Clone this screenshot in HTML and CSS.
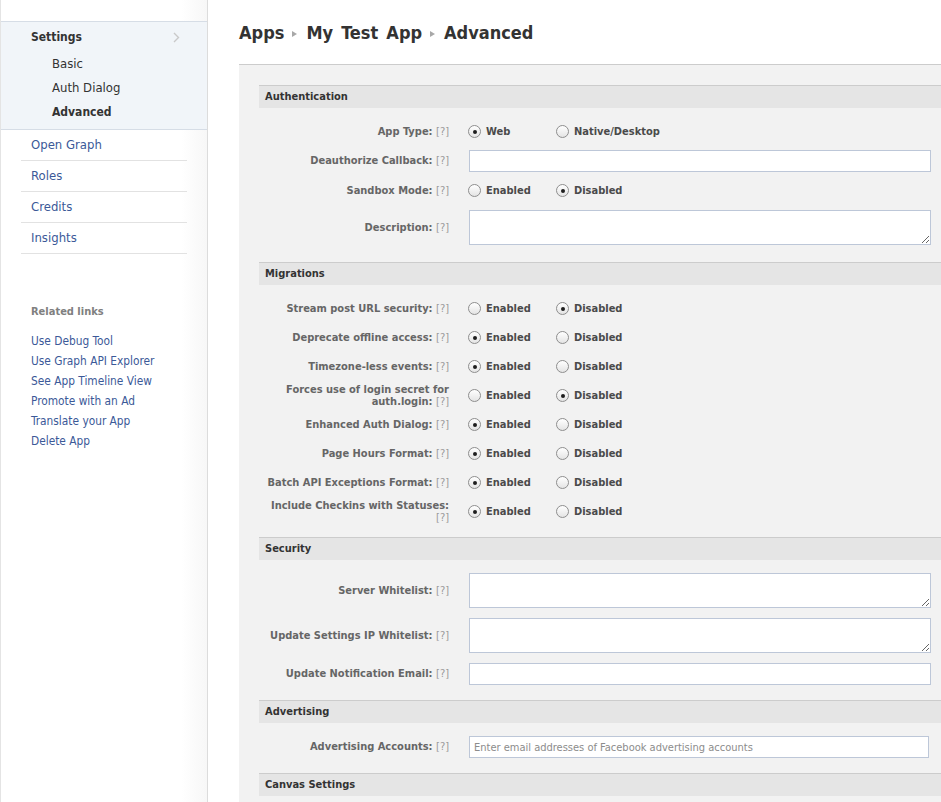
FILE: index.html
```html
<!DOCTYPE html>
<html>
<head>
<meta charset="utf-8">
<title>Advanced - My Test App</title>
<link rel="stylesheet" href="styles.css">
</head>
<body>
<div class="page">
  <aside class="sidebar">
    <div class="side-top"></div>
    <div class="settings">
      <div class="settings-head">
        <span>Settings</span>
        <svg class="chev" width="7" height="11" viewBox="0 0 7 11"><path d="M1 1 L5.5 5.5 L1 10" fill="none" stroke="#c9c9c9" stroke-width="1.4"/></svg>
      </div>
      <ul class="sub">
        <li>Basic</li>
        <li>Auth Dialog</li>
        <li class="current">Advanced</li>
      </ul>
    </div>
    <ul class="nav">
      <li><a href="#">Open Graph</a></li>
      <li><a href="#">Roles</a></li>
      <li><a href="#">Credits</a></li>
      <li><a href="#">Insights</a></li>
    </ul>
    <div class="related">
      <div class="related-head">Related links</div>
      <ul class="related-list">
        <li><a href="#">Use Debug Tool</a></li>
        <li><a href="#">Use Graph API Explorer</a></li>
        <li><a href="#">See App Timeline View</a></li>
        <li><a href="#">Promote with an Ad</a></li>
        <li><a href="#">Translate your App</a></li>
        <li><a href="#">Delete App</a></li>
      </ul>
    </div>
  </aside>

  <main class="main">
    <h1 class="crumbs"><span>Apps</span><span class="tri"></span><span class="crumb-mid">My Test App</span><span class="tri"></span><span>Advanced</span></h1>
    <div class="panel">

      <section class="sec">
        <h2 class="sec-head">Authentication</h2>
        <div class="sec-body sec-auth">
          <div class="row">
            <div class="lbl">App Type: <span class="q">[?]</span></div>
            <div class="ctl">
              <label class="opt"><input type="radio" name="apptype" checked>Web</label>
              <label class="opt wide"><input type="radio" name="apptype">Native/Desktop</label>
            </div>
          </div>
          <div class="row">
            <div class="lbl">Deauthorize Callback: <span class="q">[?]</span></div>
            <div class="ctl"><input class="text" type="text"></div>
          </div>
          <div class="row">
            <div class="lbl">Sandbox Mode: <span class="q">[?]</span></div>
            <div class="ctl">
              <label class="opt"><input type="radio" name="sandbox">Enabled</label>
              <label class="opt"><input type="radio" name="sandbox" checked>Disabled</label>
            </div>
          </div>
          <div class="row">
            <div class="lbl">Description: <span class="q">[?]</span></div>
            <div class="ctl"><textarea class="area"></textarea></div>
          </div>
        </div>
      </section>

      <section class="sec">
        <h2 class="sec-head">Migrations</h2>
        <div class="sec-body sec-mig">
          <div class="row">
            <div class="lbl">Stream post URL security: <span class="q">[?]</span></div>
            <div class="ctl">
              <label class="opt"><input type="radio" name="m1">Enabled</label>
              <label class="opt"><input type="radio" name="m1" checked>Disabled</label>
            </div>
          </div>
          <div class="row">
            <div class="lbl">Deprecate offline access: <span class="q">[?]</span></div>
            <div class="ctl">
              <label class="opt"><input type="radio" name="m2" checked>Enabled</label>
              <label class="opt"><input type="radio" name="m2">Disabled</label>
            </div>
          </div>
          <div class="row">
            <div class="lbl">Timezone-less events: <span class="q">[?]</span></div>
            <div class="ctl">
              <label class="opt"><input type="radio" name="m3" checked>Enabled</label>
              <label class="opt"><input type="radio" name="m3">Disabled</label>
            </div>
          </div>
          <div class="row">
            <div class="lbl">Forces use of login secret for<br>auth.login: <span class="q">[?]</span></div>
            <div class="ctl">
              <label class="opt"><input type="radio" name="m4">Enabled</label>
              <label class="opt"><input type="radio" name="m4" checked>Disabled</label>
            </div>
          </div>
          <div class="row">
            <div class="lbl">Enhanced Auth Dialog: <span class="q">[?]</span></div>
            <div class="ctl">
              <label class="opt"><input type="radio" name="m5" checked>Enabled</label>
              <label class="opt"><input type="radio" name="m5">Disabled</label>
            </div>
          </div>
          <div class="row">
            <div class="lbl">Page Hours Format: <span class="q">[?]</span></div>
            <div class="ctl">
              <label class="opt"><input type="radio" name="m6" checked>Enabled</label>
              <label class="opt"><input type="radio" name="m6">Disabled</label>
            </div>
          </div>
          <div class="row">
            <div class="lbl">Batch API Exceptions Format: <span class="q">[?]</span></div>
            <div class="ctl">
              <label class="opt"><input type="radio" name="m7" checked>Enabled</label>
              <label class="opt"><input type="radio" name="m7">Disabled</label>
            </div>
          </div>
          <div class="row">
            <div class="lbl">Include Checkins with Statuses:<br><span class="q">[?]</span></div>
            <div class="ctl">
              <label class="opt"><input type="radio" name="m8" checked>Enabled</label>
              <label class="opt"><input type="radio" name="m8">Disabled</label>
            </div>
          </div>
        </div>
      </section>

      <section class="sec">
        <h2 class="sec-head">Security</h2>
        <div class="sec-body">
          <div class="row">
            <div class="lbl">Server Whitelist: <span class="q">[?]</span></div>
            <div class="ctl"><textarea class="area"></textarea></div>
          </div>
          <div class="row">
            <div class="lbl">Update Settings IP Whitelist: <span class="q">[?]</span></div>
            <div class="ctl"><textarea class="area"></textarea></div>
          </div>
          <div class="row">
            <div class="lbl">Update Notification Email: <span class="q">[?]</span></div>
            <div class="ctl"><input class="text" type="text"></div>
          </div>
        </div>
      </section>

      <section class="sec">
        <h2 class="sec-head">Advertising</h2>
        <div class="sec-body">
          <div class="row">
            <div class="lbl">Advertising Accounts: <span class="q">[?]</span></div>
            <div class="ctl"><input class="text narrow" type="text" placeholder="Enter email addresses of Facebook advertising accounts"></div>
          </div>
        </div>
      </section>

      <section class="sec">
        <h2 class="sec-head">Canvas Settings</h2>
        <div class="sec-body"></div>
      </section>

    </div>
  </main>
</div>
</body>
</html>
```
FILE: styles.css
```css
* { box-sizing: border-box; }
html, body { margin: 0; padding: 0; height: 100%; overflow: hidden; }
body {
  font-family: "DejaVu Sans Condensed", "DejaVu Sans", sans-serif;
  color: #333;
  background: #fff;
}
ul { list-style: none; margin: 0; padding: 0; }
a { color: #3b5998; text-decoration: none; }

.page { display: flex; min-height: 802px; }

/* Sidebar */
.sidebar {
  width: 208px;
  flex: none;
  border-left: 1px solid #e4e4e4;
  border-right: 1px solid #dcdcdc;
  background: linear-gradient(to right, #fff 180px, #f7f7f7);
  font-size: 13px;
}
.side-top { height: 21px; }
.settings {
  border-top: 1px solid #d6dde6;
  border-bottom: 1px solid #d6dde6;
  background: #f1f5f9;
  padding: 0 0 5px;
}
.settings-head {
  display: flex;
  align-items: center;
  justify-content: space-between;
  height: 29px;
  padding: 1px 27px 0 30px;
  font-size: 12px;
  font-weight: bold;
  color: #333;
}
.chev { display: block; }
.sub { padding-top: 1px; }
.sub li {
  height: 24px;
  line-height: 24px;
  padding-left: 51px;
  color: #333;
}
.sub li.current { font-weight: bold; font-size: 12px; }

.nav { margin: 0 20px; }
.nav li {
  border-bottom: 1px solid #e2e2e2;
  padding: 7px 10px 8px;
  line-height: 15px;
}

.related { margin-top: 51px; padding-left: 30px; font-size: 11.8px; }
.related-head {
  font-size: 11px;
  font-weight: bold;
  color: #808080;
  line-height: 14px;
  margin-bottom: 12px;
}
.related-list li { line-height: 20px; height: 20px; }

/* Main */
.main { flex: 1; padding-left: 31px; min-width: 0; }
.crumbs {
  display: flex;
  align-items: center;
  margin: 0;
  padding-top: 22px;
  height: 44px;
  font-size: 18px;
  line-height: 22px;
  font-weight: bold;
  color: #333;
}
.crumb-mid { word-spacing: 2.5px; }
.tri {
  width: 0;
  height: 0;
  border-left: 5px solid #a8a8a8;
  border-top: 3.5px solid transparent;
  border-bottom: 3.5px solid transparent;
  margin: 1px 9px 0 8px;
}

.panel {
  margin-top: 20px;
  background: #f2f2f2;
  border-top: 1px solid #cccccc;
  padding: 20px 0 0 20px;
  min-height: 760px;
}

.sec-head {
  margin: 0;
  height: 23px;
  border-top: 1px solid #cccccc;
  background: #e5e5e5;
  font-size: 11px;
  line-height: 22px;
  font-weight: bold;
  color: #333;
  padding-left: 6px;
}
.sec-body { padding: 8px 0 10px; }
.sec-auth { padding: 9px 0 12px; }
.sec-auth .text { margin: 4px 0; }
.sec-mig { padding: 9px 0 11px; }

.row {
  display: flex;
  align-items: center;
  min-height: 29px;
}
.lbl {
  width: 190px;
  flex: none;
  text-align: right;
  font-size: 11px;
  line-height: 12px;
  font-weight: bold;
  color: #666;
  white-space: nowrap;
}
.q { font-weight: normal; color: #9a9a9a; }
.ctl {
  margin-left: 20px;
  width: 462px;
  display: flex;
  align-items: center;
}

.opt {
  width: 88px;
  display: flex;
  align-items: center;
  font-size: 11px;
  font-weight: bold;
  color: #4a4a4a;
}
.opt.wide { width: auto; }
.opt input {
  -webkit-appearance: none;
  appearance: none;
  position: relative;
  width: 13px;
  height: 13px;
  margin: 0 5px 0 -1px;
  border: 1px solid #8e8e8e;
  border-radius: 50%;
  background: linear-gradient(#ffffff, #e4e4e4);
  flex: none;
}
.opt input:checked::after {
  content: "";
  position: absolute;
  inset: 0;
  margin: auto;
  width: 4px;
  height: 4px;
  border-radius: 50%;
  background: #1e1e1e;
}

.text, .area {
  display: block;
  width: 462px;
  margin: 5px 0;
  border: 1px solid #bdc7d8;
  background: #fff;
  font-family: inherit;
  font-size: 11px;
  color: #333;
  padding: 3px 4px;
  outline: none;
}
.text { height: 22px; }
.text.narrow { width: 460px; }
.area { height: 35px; resize: vertical; }
.text::placeholder { color: #8c8c8c; }
```
